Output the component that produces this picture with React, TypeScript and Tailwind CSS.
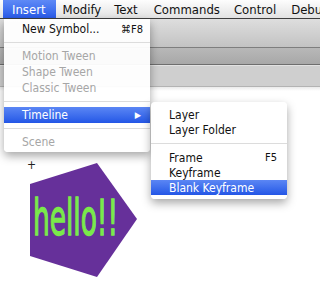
import React from 'react';

const font = { fontFamily: '"Lucida Grande", "DejaVu Sans", "Liberation Sans", sans-serif' };

function Item({ label, shortcut, disabled, active, arrow, h = 'h-[16px]' }: { label: string; shortcut?: string; disabled?: boolean; active?: boolean; arrow?: boolean; h?: string }) {
  return (
    <div
      className={
        'flex items-center justify-between pl-[18px] text-[12px] leading-none ' + h + ' ' +
        (active ? 'bg-gradient-to-b from-[#5b86f4] to-[#2456e6] text-white' : disabled ? 'text-[#a6a6a6]' : 'text-[#111]')
      }
    >
      <span>{label}</span>
      {shortcut && <span className="text-[11px]">{shortcut}</span>}
      {arrow && <span className="text-[9px] mr-[-1px]">▶</span>}
    </div>
  );
}

function Sep({ m = 'my-[5px]' }: { m?: string }) {
  return <div className={'h-px bg-[#dcdcdc] ' + m} />;
}

export default function App() {
  return (
    <div className="relative w-[320px] h-[289px] overflow-hidden bg-white font-stretch-condensed" style={font}>
      {/* menubar */}
      <div className="flex items-center h-[19px] bg-gradient-to-b from-[#fdfdfd] to-[#e2e2e2] border-b border-[#3e3e3e] text-[13px] text-[#111] leading-none whitespace-nowrap">
        <div className="h-full flex items-center pl-[9px] pr-[10px] ml-[3px] bg-gradient-to-b from-[#5f8af6] to-[#2a5ae8] text-white">Insert</div>
        <div className="ml-[7px]">Modify</div>
        <div className="ml-[13px]">Text</div>
        <div className="ml-[16px]">Commands</div>
        <div className="ml-[14px]">Control</div>
        <div className="ml-[15px]">Debug</div>
      </div>
      {/* toolbars */}
      <div className="h-[28px] bg-gradient-to-b from-[#dedede] to-[#c3c3c3]" />
      <div className="h-[18px] border-t border-[#7e7e7e] border-b border-b-[#6e6e6e] bg-gradient-to-b from-[#b8b8b8] to-[#a8a8a8]" />
      <div className="h-[22px] border-t border-[#e2e2e2] bg-[#cfcfcf] border-b border-b-[#b3b3b3]" />
      <div className="h-[4px] bg-gradient-to-b from-[#eaeaea] to-white" />

      {/* stage */}
      <div className="absolute left-[27px] top-[156px] text-[12px] text-[#222]">+</div>
      <svg className="absolute left-0 top-0" width="320" height="289">
        <polygon points="97,163 30,184 30,256 97,277 137,219" fill="#66309a" />
        <text x="33" y="235" fill="#7aea4a" stroke="#7aea4a" strokeWidth="1.3" fontSize="50" fontFamily="'DejaVu Sans', 'Liberation Sans Narrow', 'Liberation Sans', sans-serif" fontStretch="condensed" textLength="85" lengthAdjust="spacingAndGlyphs">
          hello!!
        </text>
      </svg>

      {/* Insert menu */}
      <div className="absolute left-[4px] top-[19px] w-[146px] pt-[2px] pb-[2px] pr-[7px] bg-white/95 rounded-b-[4px] shadow-[0_4px_10px_rgba(0,0,0,0.35)]">
        <Item label="New Symbol..." shortcut="⌘F8" />
        <div className="-mr-[7px]">
          <Sep />
        </div>
        <Item label="Motion Tween" disabled />
        <Item label="Shape Tween" disabled />
        <Item label="Classic Tween" disabled />
        <div className="-mr-[7px]">
          <Sep />
        </div>
        <div className="-mr-[7px]">
          <div className="pr-[10px] bg-gradient-to-b from-[#5b86f4] to-[#2456e6]">
            <Item label="Timeline" active arrow />
          </div>
        </div>
        <div className="-mr-[7px]">
          <Sep />
        </div>
        <Item label="Scene" disabled />
      </div>

      {/* Timeline submenu */}
      <div className="absolute left-[151px] top-[102px] w-[136px] pt-[5px] pb-[4px] bg-white/95 rounded-[4px] shadow-[0_4px_10px_rgba(0,0,0,0.35)]">
        <div className="pr-[10px]">
          <Item label="Layer" h="h-[15px]" />
          <Item label="Layer Folder" h="h-[15px]" />
        </div>
        <Sep m="my-[6px]" />
        <div className="pr-[10px]">
          <Item label="Frame" shortcut="F5" h="h-[15px]" />
          <Item label="Keyframe" h="h-[15px]" />
        </div>
        <Item label="Blank Keyframe" active h="h-[15px]" />
      </div>
    </div>
  );
}
